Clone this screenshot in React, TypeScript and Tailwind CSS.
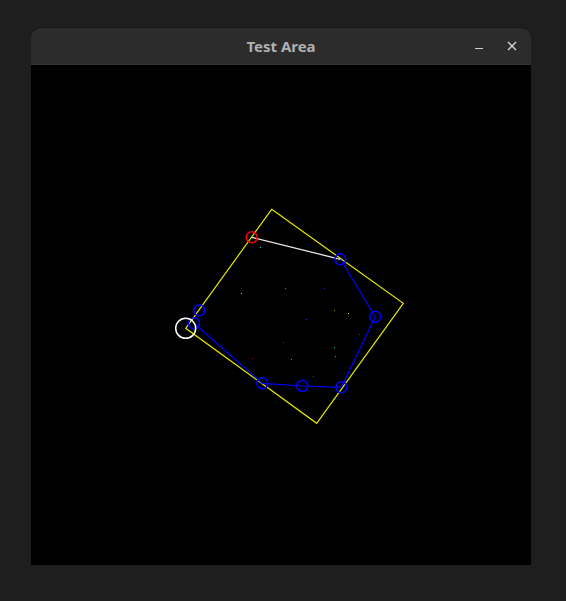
const dots = [
  { x: 229, y: 182, c: "#00d0d0" },
  { x: 210, y: 228, c: "#a0d040" },
  { x: 254, y: 223, c: "#00c000" },
  { x: 293, y: 223, c: "#3030ff" },
  { x: 303, y: 245, c: "#a08000" },
  { x: 317, y: 248, c: "#f0f000" },
  { x: 275, y: 254, c: "#3030f0" },
  { x: 328, y: 269, c: "#f00000" },
  { x: 303, y: 282, c: "#00d0d0" },
  { x: 252, y: 277, c: "#3030f0" },
  { x: 221, y: 293, c: "#f00000" },
  { x: 260, y: 294, c: "#4080c0" },
  { x: 304, y: 291, c: "#40c040" },
  { x: 282, y: 311, c: "#f00000" },
];

const hull = [
  [309.3, 194.3],
  [344.3, 251.7],
  [310.3, 322.3],
  [271.3, 321],
  [231.3, 318.3],
  [163, 258.3],
];

const points = [...hull, [168.3, 245.3]];

function Scene() {
  return (
    <svg width={500} height={500} viewBox="0 0 500 500" className="block">
      <polygon
        points="240.7,144.3 372.3,238.3 285.7,358.3 154.7,263.3"
        fill="none"
        stroke="#e6e600"
        strokeWidth={1.2}
      />
      <polyline
        points={hull.map((p) => p.join(",")).join(" ")}
        fill="none"
        stroke="#0000ff"
        strokeWidth={1.2}
      />
      <line x1={220.7} y1={172.3} x2={309.3} y2={194.3} stroke="#e8e8e8" strokeWidth={1.3} />
      {dots.map((d, i) => (
        <rect key={i} x={d.x} y={d.y} width={1} height={1} fill={d.c} />
      ))}
      {points.map((p, i) => (
        <circle key={i} cx={p[0]} cy={p[1]} r={5.5} fill="none" stroke="#0000ff" strokeWidth={1.5} />
      ))}
      <circle cx={220.7} cy={172.3} r={5.5} fill="none" stroke="#ff0000" strokeWidth={1.5} />
      <circle cx={154.7} cy={263.3} r={10} fill="none" stroke="#ffffff" strokeWidth={1.5} />
    </svg>
  );
}

export default function App() {
  return (
    <div className="w-[566px] h-[601px] bg-[#1e1e1e] pl-[31px] pt-[27px] font-['Noto_Sans',sans-serif]">
      <div className="w-[500px] flex flex-col">
        <div className="h-[38px] grid grid-cols-[1fr_auto_1fr] items-center bg-[#2c2c2c] rounded-t-[10px] border-t border-[#141414] border-b border-b-[#363636]">
          <div />
          <div className="text-[15px] font-bold text-[#b0b0b0] pt-[1px]">Test Area</div>
          <div className="flex justify-end items-center pr-[7px] gap-[9px]">
            <div className="w-6 h-6 flex items-center justify-center pt-[4px]">
              <div className="w-[8px] h-px bg-[#d0d0d0]" />
            </div>
            <div className="w-6 h-6 flex items-center justify-center">
              <svg width={10} height={10} viewBox="0 0 10 10">
                <line x1={1} y1={1} x2={9} y2={9} stroke="#d0d0d0" strokeWidth={1.4} />
                <line x1={9} y1={1} x2={1} y2={9} stroke="#d0d0d0" strokeWidth={1.4} />
              </svg>
            </div>
          </div>
        </div>
        <div className="w-[500px] h-[500px] bg-black">
          <Scene />
        </div>
      </div>
    </div>
  );
}
